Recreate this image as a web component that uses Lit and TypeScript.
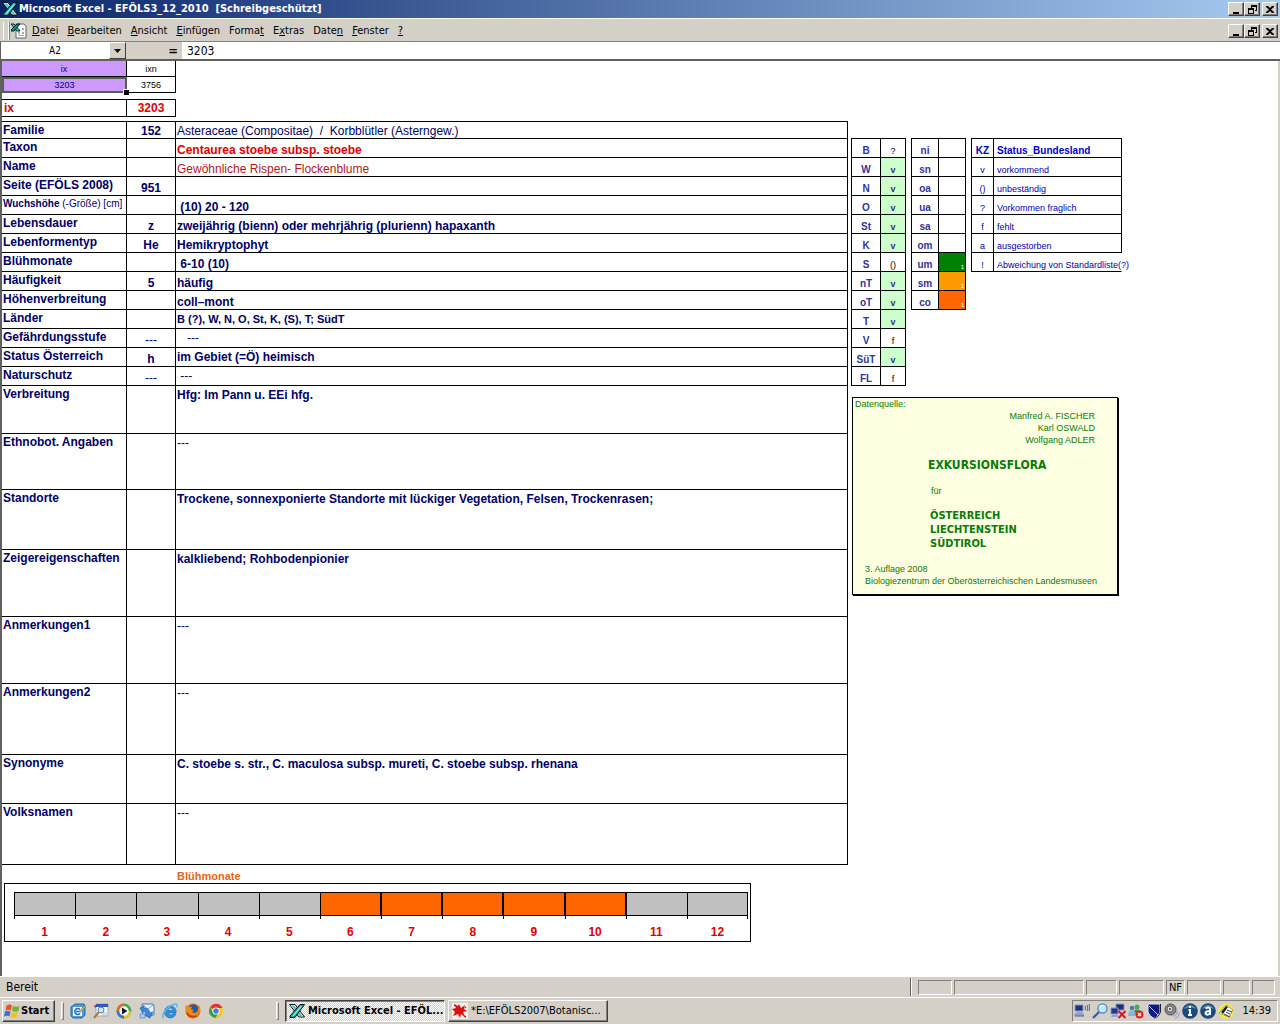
import { LitElement, html, css, svg, nothing } from "lit";
import { customElement } from "lit/decorators.js";
import { classMap } from "lit/directives/class-map.js";

const icon = (body: unknown, box = "0 0 16 16") =>
  html`<svg class="icon" viewBox=${box} aria-hidden="true">${body}</svg>`;

const excelMark = svg`
  <path d="M0.500 1.500h5.500l9.500 12.500h-5.500z" fill="#fff" stroke="#0a1414" stroke-width="1"/>
  <path d="M2 2.500h3.500l8 10.500h-3z" fill="#48d0c8"/>
  <path d="M15.500 1.500h-4.500L1 13v1.500h5z" fill="#1c9a94" stroke="#0a1414" stroke-width="1"/>
  <path d="M12.500 3L4 13" stroke="#8ff0e8" stroke-width="1.200"/>`;

const bookIcon = svg`
  <path d="M5 1h8l2 2v12H5z" fill="#fff" stroke="#606060"/>
  <path d="M7 6h2v2H7zM11 5h2v2h-2zM7 9h2v2H7zM11 9h2v2h-2zM7 12h6v1H7z" fill="#a8a8a8"/>
  <path d="M0 1h3l6 7H6z" fill="#5ad8d0" stroke="#002020"/>
  <path d="M9 1H6L0 7v1h3z" fill="#178c88" stroke="#002020"/>`;

const flagIcon = svg`
  <path d="M2.500 2.500q3-2 5.500 0L7 7.500q-2.500-1.500-5.500 0z" fill="#e8532a"/>
  <path d="M9 3q3 1.500 6.500 0l-1 5q-3 1.500-6.500 0z" fill="#6fb52c"/>
  <path d="M1 8.500q3-1.500 5.500 0L5.500 13.500q-2.500-1.500-5.500 0z" fill="#3c6fd8"/>
  <path d="M7.500 9q3 1.500 6.500 0l-1 5q-3 1.500-6.500 0z" fill="#f2c21a"/>`;

const quick = [
  { name: "Desktop anzeigen", body: svg`
    <path d="M1 4l4-3h9l1 2v9l-3 3H3l-2-2z" fill="#4a9ad8" stroke="#1f68a8"/>
    <path d="M3 4h9v9H3z" fill="#f0f8ff"/>
    <path d="M10 6.500a3 3 0 1 0 0 4M6 8.500h4" fill="none" stroke="#2a70b8" stroke-width="1.500"/>
    <path d="M9 8.500l5-5.500 1.500 1-5 5.500z" fill="#d8b060" stroke="#806020" stroke-width=".4"/>` },
  { name: "Suche", body: svg`
    <path d="M3 1h12v12H3z" fill="#f6faff" stroke="#9ab"/>
    <path d="M3 1h12v3H3z" fill="#2c58c0"/>
    <path d="M9 10h5M9 12h5" stroke="#bbb"/>
    <circle cx="8" cy="7" r="3" fill="#cfe6ff" stroke="#5080b0"/>
    <path d="M6 9l-5 6" stroke="#b07830" stroke-width="2"/><path d="M1 2l3 1-2 2z" fill="#c02020"/>` },
  { name: "Media Player", body: svg`
    <circle cx="8" cy="8" r="7.500" fill="#48a848"/>
    <path d="M8 8V.5A7.500 7.500 0 0 0 .5 8z" fill="#e86820"/>
    <path d="M8 8H.5A7.500 7.500 0 0 0 8 15.500z" fill="#3878d0"/>
    <path d="M8 8v7.500A7.500 7.500 0 0 0 15.500 8z" fill="#f0c020"/>
    <circle cx="8" cy="8" r="4.700" fill="#fff"/><path d="M6 4.500L11.500 8 6 11.500z" fill="#101820"/>` },
  { name: "Outlook Express", body: svg`
    <path d="M3 1h11l1 2v9H4z" fill="#e8f2ff" stroke="#3a78c8"/>
    <path d="M4 2l5 4 5-4" fill="none" stroke="#7aa8e0"/>
    <path d="M1 5l4-2v2q5 0 6 5l3-1-3 6-6-3 2-1q-1-3-3-3v2z" fill="#3888e0" stroke="#1850a0" stroke-width=".6"/>
    <path d="M1 11h5v4H1z" fill="#a8ccf4" stroke="#3a78c8" stroke-width=".6"/>` },
  { name: "Internet Explorer", body: svg`
    <path d="M14 10H6a2.800 2.800 0 0 0 5 .8h3a6 6 0 1 1 .2-3zM6 7.500h5a2.500 2.500 0 0 0-5 0z" fill="#2a90e0" stroke="#1868b8" stroke-width=".6"/>
    <path d="M1.500 15C-1 11 6 3 12 1.200c3-.8 3.500 1 2.500 3" fill="none" stroke="#55b8f4" stroke-width="1.600"/>` },
  { name: "Firefox", body: svg`
    <circle cx="8" cy="8" r="7.500" fill="#e86a10"/>
    <circle cx="8.500" cy="6.500" r="5" fill="#2a58a8"/>
    <path d="M1 2l3 2 3 0-1 2.500 3 .5-2 2 2 1q4 0 4-4l1-4q3 5-1 9-5 4-10 0-4-4-2-9z" fill="#f08a18"/>
    <path d="M2 10q3 5 9 3" fill="none" stroke="#c83808" stroke-width="1.500"/>` },
  { name: "Chrome", body: svg`
    <circle cx="8" cy="8" r="7" fill="#f4c820"/>
    <path d="M8 8L2 4.300A7 7 0 0 1 14.500 5H8z" fill="#dc3a2c"/>
    <path d="M2 4.300A7 7 0 0 0 7.500 15L10.500 9.500 5 9z" fill="#38a04c"/>
    <circle cx="8" cy="8" r="3.600" fill="#fff"/><circle cx="8" cy="8" r="2.700" fill="#3c7ce0"/>` },
];

const disc = (path: string) => svg`
  <circle cx="8" cy="8" r="7.800" fill="#1c4a7c"/>
  <path d="M2 6a6.500 6.500 0 0 1 12 0q-6-3-12 0z" fill="#5484b4"/>
  <path d=${path} fill="none" stroke="#fff" stroke-width="2"/>`;

const tray = [
  svg`<path d="M1 2h8v6H1z" fill="#20307c" stroke="#8898b8"/><path d="M3 9h5l2 2v2H0v-2z" fill="#90a4cc"/>
    <path d="M1 13h9" stroke="#5060a0"/><path d="M11 3q1.500 2 0 4M13 2q2 3 0 6M15 1q2 4 0 7" fill="none" stroke="#404858" stroke-width=".8"/>`,
  svg`<circle cx="10.500" cy="5.500" r="4.600" fill="#c4e6fc" stroke="#4888c8" stroke-width="1.300"/>
    <path d="M7.500 4q1-2 4-1.500" fill="none" stroke="#fff"/><path d="M7 9L1 15" stroke="#3a5cae" stroke-width="2.300"/>`,
  svg`<path d="M6 1h8v6H6z" fill="#1c2c80" stroke="#8898b8"/><path d="M1 5h7v6H1z" fill="#243890" stroke="#8898b8"/>
    <path d="M2 12h6v2H1z" fill="#90a4cc"/><path d="M8.500 8l7 7M15.500 8l-7 7" stroke="#d81818" stroke-width="2"/>`,
  svg`<circle cx="9" cy="4" r="2.500" fill="#48a858"/><path d="M5 12q0-6 4-5.500 5 0 5 5.500z" fill="#3c9850"/>
    <circle cx="4" cy="5" r="2.300" fill="#4878c0"/><path d="M0 13q0-6 4-5.500 4 0 4 5.500z" fill="#86b4e0"/>
    <circle cx="11.500" cy="11.500" r="4" fill="#d02c20"/><path d="M10 10l3 3M13 10l-3 3" stroke="#fff" stroke-width="1.200"/>`,
  svg`<path d="M2 1h12v8q-1 4-6 6.500Q3 13 2 9z" fill="#101c80" stroke="#e8e8f4"/>
    <path d="M3 3l9 9" stroke="#c8d0f0"/><path d="M14.500 1v8q-1 4-6 6.500" fill="none" stroke="#202020"/>`,
  svg`<circle cx="6.500" cy="6.500" r="5.500" fill="#8c8c8c" stroke="#4c4c4c"/><circle cx="6" cy="6" r="3" fill="#d8d8d8" stroke="#606060"/>
    <circle cx="6" cy="6" r="1" fill="#444"/><path d="M9 13q4 0 4-5M11 15.500q4-1 4.500-6" fill="none" stroke="#9098c8"/>`,
  disc("M8 3v2M6.500 7H8v5M6 12h4"),
  disc("M5.500 5.500Q10 3 10 6.500V12M10 8Q5 8 5.500 10.500 7 13 10 10.500"),
  svg`<path d="M8 0l3 1 3 2 2 4-1 5-3 3-4 1-5-2-3-5 1-4 3-3z" fill="#f4ec3c"/><path d="M1 10l7-8 7 5-4 7z" fill="#fff" stroke="#606060" stroke-width=".6"/>
    <path d="M3 9l5-6 2 1-5 7z" fill="#202020"/><path d="M6 11l6 3M9 7l5 2M8 9l4 2" stroke="#303030"/>`,
];

const splat = svg`
  <path d="M0 0h16v16H0z" fill="#f4f0ec"/>
  <path d="M7 1l2 4 4-3-1 4 3 2-4 1 2 5-4-3-1 4-2-4-5 2 2-4-3-3 4-1-2-4 4 2z" fill="#dc1010"/>
  <path d="M2 2l2 1M12 13l2 1M13 5l1-1" stroke="#c02020" stroke-width="1.500"/>`;

const minGlyph = svg`<path d="M3 8h6v2H3z"/>`;
const restoreGlyph = svg`<path d="M5 1h6v6H9V6h1V3H6v1H5zM2 4h6v6H2zm1 2v3h4V6z" fill-rule="evenodd"/>`;
const closeGlyph = svg`<path d="M3 2h1l2 2 2-2h2v1L7 5.500 10 8v1H8L6 7 4 9H2V8l3-2.500L2 3V2z"/>`;

type Row = {
  label: string; note?: string; code?: string; value: string;
  size: string; at?: string; tone?: string;
};

const rows: Row[] = [
  { label: "Familie", code: "152", value: "Asteraceae (Compositae)  /  Korbblütler (Asterngew.)", size: "first", tone: "plain" },
  { label: "Taxon", value: "Centaurea stoebe subsp. stoebe", size: "line", tone: "taxon" },
  { label: "Name", value: "Gewöhnliche Rispen- Flockenblume", size: "line", tone: "common" },
  { label: "Seite (EFÖLS 2008)", code: "951", value: "", size: "line" },
  { label: "Wuchshöhe", note: "(-Größe) [cm]", value: " (10) 20 - 120", size: "line" },
  { label: "Lebensdauer", code: "z", value: "zweijährig (bienn) oder mehrjährig (plurienn) hapaxanth", size: "line" },
  { label: "Lebenformentyp", code: "He", value: "Hemikryptophyt", size: "line" },
  { label: "Blühmonate", value: " 6-10 (10)", size: "line" },
  { label: "Häufigkeit", code: "5", value: "häufig", size: "line" },
  { label: "Höhenverbreitung", value: "coll–mont", size: "line" },
  { label: "Länder", value: "B (?), W, N, O, St, K, (S), T; SüdT", size: "line", at: "top", tone: "small" },
  { label: "Gefährdungsstufe", code: "---", value: "   ---", size: "line", at: "top", tone: "plain" },
  { label: "Status Österreich", code: "h", value: "im Gebiet (=Ö) heimisch", size: "line", at: "top" },
  { label: "Naturschutz", code: "---", value: " ---", size: "line", at: "top", tone: "plain" },
  { label: "Verbreitung", value: "Hfg: Im Pann u. EEi hfg.", size: "h48", at: "top" },
  { label: "Ethnobot. Angaben", value: "---", size: "h56", at: "top" },
  { label: "Standorte", value: "Trockene, sonnexponierte Standorte mit lückiger Vegetation, Felsen, Trockenrasen;", size: "h60", at: "top" },
  { label: "Zeigereigenschaften", value: "kalkliebend; Rohbodenpionier", size: "h67", at: "top" },
  { label: "Anmerkungen1", value: "---", size: "h67", at: "top" },
  { label: "Anmerkungen2", value: "---", size: "h71", at: "top" },
  { label: "Synonyme", value: "C. stoebe s. str., C. maculosa subsp. mureti, C. stoebe subsp. rhenana", size: "h49", at: "top" },
  { label: "Volksnamen", value: "---", size: "h61", at: "top" },
];

const lands = [["B", "?"], ["W", "v"], ["N", "v"], ["O", "v"], ["St", "v"], ["K", "v"], ["S", "()"],
  ["nT", "v"], ["oT", "v"], ["T", "v"], ["V", "f"], ["SüT", "v"], ["FL", "f"]];
const levels = [["ni", ""], ["sn", ""], ["oa", ""], ["ua", ""], ["sa", ""], ["om", ""],
  ["um", "green"], ["sm", "amber"], ["co", "orange"]];
const legend = [["v", "vorkommend"], ["()", "unbeständig"], ["?", "Vorkommen fraglich"],
  ["f", "fehlt"], ["a", "ausgestorben"], ["!", "Abweichung von Standardliste(?)"]];
const menus = [["", "D", "atei"], ["", "B", "earbeiten"], ["", "A", "nsicht"], ["", "E", "infügen"], ["Forma", "t", ""],
  ["E", "x", "tras"], ["Date", "n", ""], ["", "F", "enster"], ["", "?", ""]];

@customElement("app-root")
export class AppRoot extends LitElement {
  static styles = css`
    :host {
      display: flex; flex-direction: column; min-height: 100vh; background: #d4d0c8; color: #000;
      font: 11px/14px "DejaVu Sans Condensed", "DejaVu Sans", sans-serif;
    }
    * { box-sizing: border-box; }
    button, input { font: inherit; color: inherit; margin: 0; padding: 0; border: 0; border-radius: 0; background: none; }
    .icon { width: 16px; height: 16px; display: block; flex: none; }
    .titlebar {
      display: flex; align-items: center; height: 18px; padding: 0 2px; gap: 1px;
      background: linear-gradient(90deg, #0a246a, #a6caf0); color: #fff;
    }
    .titlebar h1 { margin: 0; flex: 1; font: inherit; font-weight: bold; white-space: pre; }
    .winbtns { display: flex; color: #000; }
    .winbtn {
      width: 16px; height: 14px; display: grid; place-items: center; background: #d4d0c8;
      border: 1px solid; border-color: #fff #404040 #404040 #fff; box-shadow: inset -1px -1px #808080;
    }
    .winbtn:last-child { margin-left: 2px; }
    .winbtn .icon { width: 12px; height: 11px; }
    .menubar {
      display: flex; align-items: center; height: 24px; padding: 2px 2px 0 3px;
      border-top: 1px solid #fff; border-bottom: 1px solid #808080;
    }
    .grip { width: 6px; height: 18px; margin-right: 2px; border: 1px solid #fff; border-width: 0 1px 0 1px; box-shadow: 1px 0 #808080; flex: none; }
    .menus { display: flex; flex: 1; gap: 9px; margin-left: 5px; }
    .formula { display: flex; height: 19px; border-bottom: 2px solid #606060; border-left: 1px solid #606060; background: #fff; }
    .namebox { flex: 0 0 108px; width: 108px; text-align: center; font-size: 10px; }
    .drop { flex: 0 0 17px; background: #d4d0c8; border: 1px solid; border-color: #fff #404040 #404040 #fff; display: grid; place-items: center; }
    .drop .icon { width: 9px; height: 6px; }
    .equals { flex: 0 0 56px; background: #d4d0c8; padding-right: 4px; text-align: right; font-size: 13px; line-height: 17px; font-weight: bold; }
    .entry { flex: 1; min-width: 0; padding-left: 5px; font-size: 12px; }
    .sheet {
      flex: 1; background: #fff; border-left: 2px solid #606060; border-right: 2px solid #d4d0c8;
      font-family: "Liberation Sans", Arial, sans-serif; overflow: hidden; padding-bottom: 12px;
    }
    table { border-collapse: separate; border-spacing: 0; table-layout: fixed; }
    th, td { padding: 0 2px; border: 0 solid #000; border-width: 0 1px 1px 0; font-weight: bold; overflow: hidden; white-space: pre; }
    .c-label { width: 125px; }
    .c-code { width: 49px; }
    .index { width: 174px; font-size: 9px; line-height: 12px; }
    .index th, .index td { height: 16px; font-weight: normal; text-align: center; }
    .index .hot { background: #cc99ff; color: #000080; }
    .index .picked { position: relative; overflow: visible; border: 2px solid #556050; }
    .picked::after { content: ""; position: absolute; right: -4px; bottom: -4px; width: 5px; height: 5px; background: #000; border: 1px solid #fff; border-width: 1px 0 0 1px; }
    .current { width: 174px; margin: 6px 0 4px; border-top: 1px solid #000; color: #e00000; font-size: 12px; line-height: 16px; }
    .current th { height: 17px; text-align: left; font-size: 12px; line-height: 16px; vertical-align: top; }
    .current td { text-align: center; }
    .body { display: flex; align-items: flex-start; }
    .record { width: 100%; border-top: 1px solid #000; color: #000066; font-size: 12px; line-height: 13px; }
    .record-wrap { flex: 1 1 0; max-width: 846px; min-width: 0; }
    .record th, .record td { padding: 0 1px; }
    .record th { text-align: left; vertical-align: top; line-height: 16px; padding-right: 0; }
    .record td { vertical-align: bottom; }
    .record td.code { text-align: center; }
    .record td.top { vertical-align: top; line-height: 18px; }
    .record .wuchs { font-size: 10px; }
    .wuchs .note, .record .plain, .record .common { font-weight: normal; }
    .record .taxon { color: #e00000; }
    .record .common { color: #b01818; }
    .record .small { font-size: 11px; line-height: 15px; }
    .first { height: 17px; } .line { height: 19px; } .h48 { height: 48px; } .h49 { height: 49px; }
    .h56 { height: 56px; } .h60 { height: 60px; } .h61 { height: 61px; } .h67 { height: 67px; } .h71 { height: 71px; }
    .side { flex: none; margin: 17px 0 0 3px; display: flex; flex-direction: column; gap: 11px; }
    .keys { display: flex; align-items: flex-start; gap: 5px; font-size: 10px; line-height: 12px; }
    .keys table { border: 0 solid #000; border-width: 1px 0 0 1px; }
    .keys th, .keys td { height: 19px; padding: 0; vertical-align: bottom; text-align: center; }
    .keys td { font-weight: normal; font-size: 9px; }
    .lands, .levels { width: 55px; }
    .c-land { width: 29px; } .c-level { width: 27px; }
    .lands th, .levels th, .lands .yes { color: #333399; }
    .lands .yes { background: #ccffcc; font-weight: bold; }
    .levels td { font-size: 6px; line-height: 8px; color: #fff; text-align: right; padding-right: 1px; }
    .green { background: #008000; } .amber { background: #ff9900; } .orange { background: #ff6600; }
    .legend { width: 151px; color: #0000b0; }
    .c-kz { width: 22px; }
    .legend th { color: #0000cc; }
    .legend .text { text-align: left; padding-left: 3px; overflow: visible; }
    .legend tr:last-child .text { border-right-color: transparent; }
    .source {
      width: 266px; margin-left: 1px; padding: 0 2px 7px; background: #ffffe1; color: #0a7a0a; border: 1px solid #000;
      box-shadow: 1px 1px #000; font-size: 9px; line-height: 12px;
    }
    .source p { margin: 0; }
    .authors { text-align: right; padding-right: 20px; }
    .source h2, .regions { font-family: "DejaVu Sans Condensed", "DejaVu Sans", sans-serif; font-weight: bold; }
    .source h2 { margin: 11px 0 12px 73px; font-size: 12px; line-height: 16px; }
    .source .for { margin-left: 76px; }
    .source .regions { margin: 12px 0 12px 75px; font-size: 11px; line-height: 14px; }
    .source .edition { margin-left: 10px; white-space: nowrap; }
    .charttitle { margin: 4px 0 0 175px; font-size: 11px; line-height: 14px; font-weight: bold; color: #e86410; }
    .chart { max-width: 747px; margin: 0 2px; border: 1px solid #000; padding: 8px 2px 0 9px; display: grid; grid-template-columns: repeat(12, 1fr); }
    .month { font-size: 12px; line-height: 17px; font-weight: bold; color: #e00000; text-align: center; }
    .bar { height: 24px; background: #c0c0c0; border: 1px solid #000; border-right-width: 0; }
    .tick { height: 3px; border-left: 1px solid #000; margin-bottom: 5px; }
    .month:last-child .bar { border-right-width: 1px; }
    .month:last-child .tick { border-right: 1px solid #000; }
    .month.on .bar { background: #ff6600; border-right-width: 1px; }
    .status { display: flex; align-items: center; gap: 2px; height: 21px; padding: 0 5px 0 6px; border-top: 1px solid #fff; }
    .status .ready { flex: 1; font-size: 12px; }
    .split { width: 2px; height: 18px; border-left: 1px solid #606060; border-right: 1px solid #fff; flex: none; margin-right: 4px; }
    .pane { height: 15px; border: 1px solid; border-color: #808080 #fff #fff #808080; text-align: center; line-height: 14px; flex: none; }
    .w19 { width: 19px; } .w23 { width: 23px; } .w27 { width: 27px; } .w31 { width: 31px; } .w34 { width: 34px; }
    .w45 { width: 45px; } .w130 { width: 130px; }
    .taskbar { display: flex; align-items: center; height: 27px; padding: 0 2px; border-top: 1px solid #fff; }
    .raised { background: #d4d0c8; border: 1px solid; border-color: #fff #404040 #404040 #fff; box-shadow: inset -1px -1px #808080; }
    .start { display: flex; align-items: center; gap: 1px; width: 53px; height: 22px; padding-left: 1px; font-weight: bold; }
    .bargrip { width: 3px; height: 18px; margin: 0 6px; border: 1px solid; border-color: #fff #808080 #808080 #fff; flex: none; }
    .quick { display: flex; gap: 7px; width: 200px; }
    .quick button { flex: none; }
    .task { display: flex; align-items: center; gap: 3px; width: 160px; height: 22px; padding: 0 3px; white-space: nowrap; margin-right: 3px; overflow: hidden; }
    .task.active {
      font-weight: bold; border: 1px solid; border-color: #404040 #fff #fff #404040; box-shadow: inset 1px 1px #808080;
      background: repeating-conic-gradient(#fff 0 25%, #d4d0c8 0 50%) 0 0 / 2px 2px;
    }
    .tray { margin-left: auto; display: flex; align-items: center; gap: 2px; height: 22px; padding: 0 6px 0 1px; border: 1px solid; border-color: #808080 #fff #fff #808080; }
    .clock { margin-left: 6px; }
  `;

  private windowButtons(scope: string) {
    return html`<div class="winbtns">
      <button class="winbtn" aria-label="${scope} minimieren">${icon(minGlyph, "0 0 12 11")}</button>
      <button class="winbtn" aria-label="${scope} wiederherstellen">${icon(restoreGlyph, "0 0 12 11")}</button>
      <button class="winbtn" aria-label="${scope} schließen">${icon(closeGlyph, "0 0 12 11")}</button>
    </div>`;
  }

  private record() {
    return html`<div class="record-wrap"><table class="record">
      <colgroup><col class="c-label"><col class="c-code"><col></colgroup>
      <tbody>${rows.map((r) => html`<tr>
        <th scope="row" class="${r.size} ${r.note ? "wuchs" : ""}">${r.label}${r.note ? html`<span class="note"> ${r.note}</span>` : nothing}</th>
        <td class="code ${r.code === "---" ? "plain" : ""}">${r.code ?? ""}</td>
        <td class="${r.at ?? ""} ${r.tone ?? (r.value === "---" ? "plain" : "")}">${r.value}</td>
      </tr>`)}</tbody>
    </table></div>`;
  }

  private side() {
    return html`<div class="side">
      <div class="keys">
        <table class="lands"><colgroup><col class="c-land"><col></colgroup><tbody>
          ${lands.map(([k, v]) => html`<tr><th scope="row">${k}</th><td class=${classMap({ yes: v === "v" })}>${v}</td></tr>`)}
        </tbody></table>
        <table class="levels"><colgroup><col class="c-level"><col></colgroup><tbody>
          ${levels.map(([k, c]) => html`<tr><th scope="row">${k}</th><td class=${c}>${c ? "1" : ""}</td></tr>`)}
        </tbody></table>
        <table class="legend"><colgroup><col class="c-kz"><col></colgroup><tbody>
          <tr><th scope="col">KZ</th><th scope="col" class="text">Status_Bundesland</th></tr>
          ${legend.map(([k, t]) => html`<tr><td>${k}</td><td class="text">${t}</td></tr>`)}
        </tbody></table>
      </div>
      <section class="source">
        <p>Datenquelle:</p>
        <p class="authors">Manfred A. FISCHER<br>Karl OSWALD<br>Wolfgang ADLER</p>
        <h2>EXKURSIONSFLORA</h2>
        <p class="for">für</p>
        <p class="regions">ÖSTERREICH<br>LIECHTENSTEIN<br>SÜDTIROL</p>
        <p class="edition">3. Auflage 2008<br>Biologiezentrum der Oberösterreichischen Landesmuseen</p>
      </section>
    </div>`;
  }

  render() {
    return html`
      <header class="titlebar">${icon(excelMark)}<h1>Microsoft Excel - EFÖLS3_12_2010  [Schreibgeschützt]</h1>${this.windowButtons("Programm")}</header>
      <nav class="menubar">
        <span class="grip"></span>${icon(bookIcon)}
        <div class="menus">${menus.map(([a, k, b]) => html`<button>${a}<u>${k}</u>${b}</button>`)}</div>
        ${this.windowButtons("Mappe")}
      </nav>
      <div class="formula">
        <input class="namebox" aria-label="Namenfeld" value="A2">
        <button class="drop" aria-label="Namen auswählen">${icon(svg`<path d="M1 1h7L4.500 5z"/>`, "0 0 9 6")}</button>
        <span class="equals">=</span>
        <input class="entry" aria-label="Bearbeitungsleiste" value="3203">
      </div>
      <main class="sheet">
        <table class="index"><colgroup><col class="c-label"><col class="c-code"></colgroup>
          <thead><tr><th scope="col" class="hot">ix</th><th scope="col">ixn</th></tr></thead>
          <tbody><tr><td class="hot picked">3203</td><td>3756</td></tr></tbody>
        </table>
        <table class="current"><colgroup><col class="c-label"><col class="c-code"></colgroup>
          <tbody><tr><th scope="row">ix</th><td>3203</td></tr></tbody>
        </table>
        <div class="body">${this.record()}${this.side()}</div>
        <h2 class="charttitle">Blühmonate</h2>
        <div class="chart">
          ${Array.from({ length: 12 }, (_, i) => i + 1).map((m) => html`
            <div class=${classMap({ month: true, on: m >= 6 && m <= 10 })}><div class="bar"></div><div class="tick"></div>${m}</div>`)}
        </div>
      </main>
      <footer class="status">
        <span class="ready">Bereit</span><span class="split"></span>
        <span class="pane w34"></span><span class="pane w130"></span><span class="pane w31"></span><span class="pane w45"></span>
        <span class="pane w19">NF</span><span class="pane w34"></span><span class="pane w27"></span><span class="pane w23"></span>
      </footer>
      <nav class="taskbar">
        <button class="start raised">${icon(flagIcon)}Start</button>
        <span class="bargrip"></span>
        <div class="quick">${quick.map((q) => html`<button aria-label=${q.name}>${icon(q.body)}</button>`)}</div>
        <span class="bargrip"></span>
        <button class="task active">${icon(excelMark)}Microsoft Excel - EFÖL...</button>
        <button class="task raised">${icon(splat)}*E:\\EFÖLS2007\\Botanisc...</button>
        <div class="tray">${tray.map((t) => icon(t))}<time class="clock">14:39</time></div>
      </nav>`;
  }
}
